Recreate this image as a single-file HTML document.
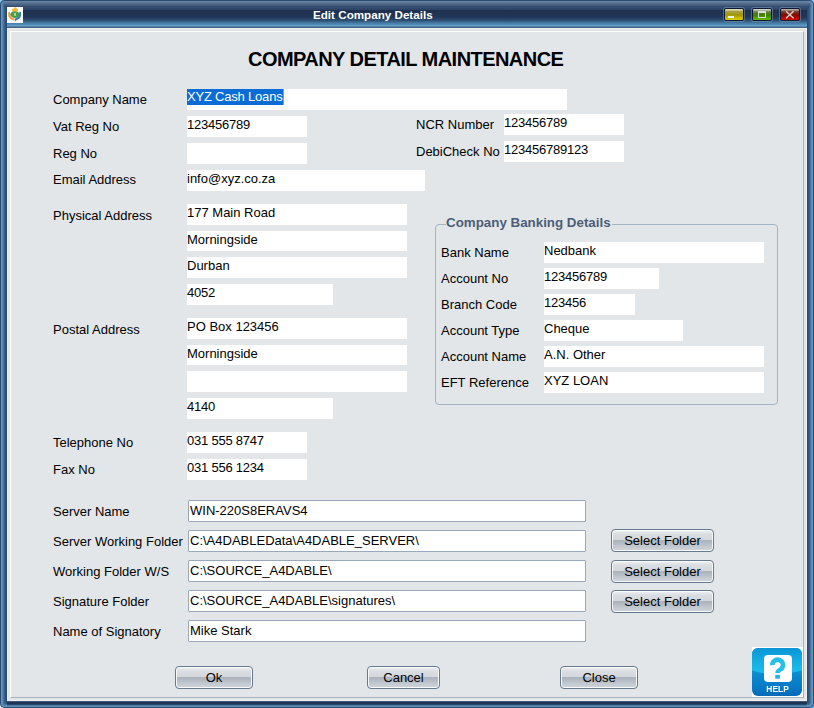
<!DOCTYPE html>
<html><head><meta charset="utf-8">
<style>
html,body{margin:0;padding:0;width:814px;height:708px;overflow:hidden;background:#8ec6f4;}
*{box-sizing:border-box;}
body{font-family:"Liberation Sans",sans-serif;font-size:13px;color:#000;position:relative;}
.a{position:absolute;}
#win{position:absolute;left:0;top:0;width:814px;height:708px;border-radius:5px 5px 5px 5px;overflow:hidden;background:#2c4f78;}
#ring{position:absolute;left:0;top:0;width:814px;height:708px;border-radius:5px 5px 5px 5px;
 box-shadow:inset 0 0 0 1px #2a4a70,inset 0 0 0 2px #6597bf,inset 0 0 0 3px #5889b3,inset 0 0 0 4px #46729b,inset 0 0 0 5px #386189,inset 0 0 0 6px #2e527a,inset 0 0 0 7px #2a4b72;}
#title{position:absolute;left:7px;top:0;width:800px;height:28px;
 background:linear-gradient(180deg,#2b4c70 0,#2b4c70 1px,#6b87a6 1px,#5a7392 3px,#3d5678 6px,#2e4567 9px,#2d4466 10px,#1e3050 10px,#213656 17px,#2a4a6e 20px,#4f87b3 24px,#66a0c9 26px,#4a6a8c 27px,#3a5878 28px);
 }
#ttop{position:absolute;left:2px;top:0;width:810px;height:7px;-webkit-mask-image:linear-gradient(90deg,transparent 0,#000 5px,#000 805px,transparent 810px);mask-image:linear-gradient(90deg,transparent 0,#000 5px,#000 805px,transparent 810px);background:linear-gradient(180deg,#2b4c70 0,#2b4c70 1px,#6b87a6 1px,#5a7392 3px,#3d5678 6px,#2e4567 7px);}
#tleft{position:absolute;left:0;top:10px;width:7px;height:18px;background:linear-gradient(90deg,#2a4a70 0,#2a4a70 1px,#5f92bb 1px,#5b8db6 3px,#3d6790 5px,#2c4f78 7px);opacity:.0}
#bottom{position:absolute;left:7px;top:701px;width:800px;height:7px;
 background:linear-gradient(180deg,#3d5576 0,#3d5576 1px,#213355 1px,#1f3453 2px,#1f3453 3px,#2b4a6b 3px,#2b4a6b 4px,#4679a0 4px,#4679a0 5px,#5a90ba 5px,#5a90ba 6px,#2c4e70 6px);}
#client{position:absolute;left:7px;top:28px;width:800px;height:673px;background:#e3e6e9;border:1px solid #eef0f2;}
#panel{position:absolute;left:10px;top:31px;width:794px;height:667px;border-top:1px solid #fff;border-left:1px solid #fff;border-right:1px solid #a8b3bd;border-bottom:1px solid #a8b3bd;}
.t{position:absolute;white-space:nowrap;line-height:15px;height:15px;}
.box{position:absolute;background:#fff;white-space:nowrap;line-height:15px;padding-left:1px;}
.box span{position:absolute;left:0;}
.sbox{position:absolute;background:#fff;border:1px solid #99a9bb;border-radius:1px;white-space:nowrap;line-height:15px;}
.btn{position:absolute;height:23px;border:1px solid #66798e;border-radius:4px;text-align:center;line-height:21px;
 background:linear-gradient(180deg,#eef0f2 0,#e6e9ec 2px,#dadde2 4px,#d4d8dd 9.5px,#aab2bc 10px,#b0b7c1 12px,#c4cad1 17px,#d0d5db 21px);
 box-shadow:inset 0 0 0 1px rgba(255,255,255,.85);}
.wb{position:absolute;top:8px;width:20px;height:13px;border:1px solid #0d1a30;border-radius:2px;box-shadow:0 0 0 1px rgba(140,165,195,.45);}
</style></head><body>
<div class="a" style="left:0;top:700px;width:8px;height:8px;background:#e4e8ec;"></div>
<div class="a" style="left:806px;top:700px;width:8px;height:8px;background:#3cbcf0;"></div>
<div id="win">
 <div id="ring"></div>
 <div id="title"></div>
 <div id="ttop"></div>
 <!-- icon -->
 <div class="a" style="left:7px;top:7px;width:16px;height:16px;background:#fff;">
  <svg width="16" height="16" viewBox="0 0 16 16" style="position:absolute;left:0;top:0">
   <path d="M1.4 5 C0.6 8.5 1.6 11.6 4.8 12.8 C6.2 13.3 7 13.9 7.3 14.9 L7.5 11.8 C6.5 11 5 10.6 4.2 9.6 C3.3 8.4 3 6.3 2.9 4.8 Z" fill="#f8a135"/>
   <path d="M13.9 5 C14.7 8.5 13.7 11.6 10.5 12.8 C9.1 13.3 8.3 13.9 8 14.9 L7.8 11.8 C8.8 11 10.3 10.6 11.1 9.6 C12 8.4 12.3 6.3 12.4 4.8 Z" fill="#3a7cc9"/>
   <path d="M3 7.4 Q5 4.1 8 4.1 Q11 4.1 13 7.4 Q11 10.9 8 10.9 Q5 10.9 3 7.4Z" fill="#4a9b45"/>
   <ellipse cx="8" cy="2.9" rx="3.1" ry="1.7" fill="#f6b62f"/>
   <ellipse cx="8.3" cy="1.2" rx="1.2" ry="1" fill="#f6b62f"/>
   <rect x="7" y="6" width="2" height="2.8" fill="#b3d3ab"/>
  </svg>
 </div>
 <div class="a" style="left:313px;top:8px;color:#fff;font-weight:bold;font-size:11.65px;line-height:14px;white-space:nowrap;">Edit Company Details</div>
 <!-- window buttons -->
 <div class="wb" style="left:724px;background:linear-gradient(180deg,#e0dcb0 0,#e0dcb0 1px,#aca458 2px,#a49c20 4px,#a09800 6px,#b8b000 8px,#d0c800 10px,#d8d000 11px);">
  <div class="a" style="left:3px;top:7px;width:6px;height:2px;background:#f0f0e0;"></div></div>
 <div class="wb" style="left:752px;background:linear-gradient(180deg,#d0d4c8 0,#d0d4c8 1px,#7c8c68 2px,#5a7a30 4px,#3c7c00 6px,#4c9800 8px,#62b000 10px,#6cbc00 11px);">
  <div class="a" style="left:5px;top:2px;width:8px;height:7px;border:1px solid #d8ded0;border-top-width:2px;"></div></div>
 <div class="wb" style="left:780px;background:linear-gradient(180deg,#b8a8a0 0,#b8a8a0 1px,#7c4a40 2px,#742818 4px,#880800 6px,#a80800 8px,#c81000 10px,#cc1000 11px);">
  <svg class="a" style="left:4px;top:2px" width="10" height="8" viewBox="0 0 10 8"><path d="M1 0.2 L8.6 7.2 M8.6 0.2 L1 7.2" stroke="#d4ccc8" stroke-width="1.45"/></svg></div>

 <div id="bottom"></div>
 <div id="client"></div>
 <div id="panel"></div>

 <div class="a" style="left:248px;top:48px;font-weight:bold;font-size:20px;letter-spacing:-0.55px;line-height:22px;white-space:nowrap;">COMPANY DETAIL MAINTENANCE</div>

 <!-- left labels -->
 <div class="t" style="left:53px;top:92px;">Company Name</div>
 <div class="t" style="left:53px;top:119px;">Vat Reg No</div>
 <div class="t" style="left:53px;top:146px;">Reg No</div>
 <div class="t" style="left:53px;top:172px;">Email Address</div>
 <div class="t" style="left:53px;top:208px;">Physical Address</div>
 <div class="t" style="left:53px;top:322px;">Postal Address</div>
 <div class="t" style="left:53px;top:435px;">Telephone No</div>
 <div class="t" style="left:53px;top:462px;">Fax No</div>

 <!-- left boxes -->
 <div class="box" style="left:187px;top:89px;width:380px;height:21px;padding:0;"><span style="top:0;left:0;height:16px;line-height:16px;background:#0a6cd4;color:#fff;padding-right:1px;letter-spacing:-0.2px;width:96px;">XYZ Cash Loans</span><span style="top:0;left:96px;width:1px;height:16px;background:#e8862a;"></span></div>
 <div class="box" style="left:187px;top:116px;width:120px;height:21px;"><span style="top:1px;letter-spacing:-0.23px;">123456789</span></div>
 <div class="box" style="left:187px;top:143px;width:120px;height:21px;"></div>
 <div class="box" style="left:187px;top:170px;width:238px;height:21px;"><span style="top:1px;">info@xyz.co.za</span></div>
 <div class="box" style="left:187px;top:204px;width:220px;height:21px;"><span style="top:1px;">177 Main Road</span></div>
 <div class="box" style="left:187px;top:231px;width:220px;height:20px;"><span style="top:1px;">Morningside</span></div>
 <div class="box" style="left:187px;top:257px;width:220px;height:21px;"><span style="top:1px;">Durban</span></div>
 <div class="box" style="left:187px;top:284px;width:146px;height:21px;"><span style="top:1px;letter-spacing:-0.23px;">4052</span></div>
 <div class="box" style="left:187px;top:318px;width:220px;height:21px;"><span style="top:1px;">PO Box 123456</span></div>
 <div class="box" style="left:187px;top:345px;width:220px;height:20px;"><span style="top:1px;">Morningside</span></div>
 <div class="box" style="left:187px;top:371px;width:220px;height:21px;"></div>
 <div class="box" style="left:187px;top:398px;width:146px;height:21px;"><span style="top:1px;letter-spacing:-0.23px;">4140</span></div>
 <div class="box" style="left:187px;top:432px;width:120px;height:21px;"><span style="top:1px;letter-spacing:-0.23px;">031 555 8747</span></div>
 <div class="box" style="left:187px;top:459px;width:120px;height:21px;"><span style="top:1px;letter-spacing:-0.23px;">031 556 1234</span></div>

 <!-- NCR / DebiCheck -->
 <div class="t" style="left:416px;top:117px;">NCR Number</div>
 <div class="t" style="left:416px;top:144px;">DebiCheck No</div>
 <div class="box" style="left:504px;top:114px;width:120px;height:21px;"><span style="top:1px;letter-spacing:-0.23px;">123456789</span></div>
 <div class="box" style="left:504px;top:141px;width:120px;height:21px;"><span style="top:1px;letter-spacing:-0.23px;">123456789123</span></div>

 <!-- banking group -->
 <div class="a" style="left:435px;top:224px;width:343px;height:181px;border:1px solid #a3b3c4;border-radius:4px;"></div>
 <div class="a" style="left:446px;top:215px;padding:0 1px 0 0;background:#e3e6e9;color:#4c5d78;font-weight:bold;font-size:13.35px;line-height:15px;white-space:nowrap;">Company Banking Details</div>
 <div class="t" style="left:441px;top:245px;">Bank Name</div>
 <div class="t" style="left:441px;top:271px;">Account No</div>
 <div class="t" style="left:441px;top:297px;">Branch Code</div>
 <div class="t" style="left:441px;top:323px;">Account Type</div>
 <div class="t" style="left:441px;top:349px;">Account Name</div>
 <div class="t" style="left:441px;top:375px;">EFT Reference</div>
 <div class="box" style="left:544px;top:242px;width:220px;height:21px;"><span style="top:1px;">Nedbank</span></div>
 <div class="box" style="left:544px;top:268px;width:115px;height:21px;"><span style="top:1px;letter-spacing:-0.23px;">123456789</span></div>
 <div class="box" style="left:544px;top:294px;width:91px;height:21px;"><span style="top:1px;letter-spacing:-0.23px;">123456</span></div>
 <div class="box" style="left:544px;top:320px;width:139px;height:21px;"><span style="top:1px;">Cheque</span></div>
 <div class="box" style="left:544px;top:346px;width:220px;height:21px;"><span style="top:1px;">A.N. Other</span></div>
 <div class="box" style="left:544px;top:372px;width:220px;height:21px;"><span style="top:1px;">XYZ LOAN</span></div>

 <!-- server section -->
 <div class="t" style="left:53px;top:504px;">Server Name</div>
 <div class="t" style="left:53px;top:534px;">Server Working Folder</div>
 <div class="t" style="left:53px;top:564px;">Working Folder W/S</div>
 <div class="t" style="left:53px;top:594px;">Signature Folder</div>
 <div class="t" style="left:53px;top:624px;">Name of Signatory</div>
 <div class="sbox" style="left:188px;top:500px;width:398px;height:22px;"><span class="a" style="left:1px;top:2px;">WIN-220S8ERAVS4</span></div>
 <div class="sbox" style="left:188px;top:530px;width:398px;height:22px;"><span class="a" style="left:1px;top:2px;">C:\A4DABLEData\A4DABLE_SERVER\</span></div>
 <div class="sbox" style="left:188px;top:560px;width:398px;height:22px;"><span class="a" style="left:1px;top:2px;">C:\SOURCE_A4DABLE\</span></div>
 <div class="sbox" style="left:188px;top:590px;width:398px;height:22px;"><span class="a" style="left:1px;top:2px;">C:\SOURCE_A4DABLE\signatures\</span></div>
 <div class="sbox" style="left:188px;top:620px;width:398px;height:22px;"><span class="a" style="left:1px;top:2px;">Mike Stark</span></div>
 <div class="btn" style="left:611px;top:529px;width:103px;">Select Folder</div>
 <div class="btn" style="left:611px;top:560px;width:103px;">Select Folder</div>
 <div class="btn" style="left:611px;top:590px;width:103px;">Select Folder</div>

 <!-- bottom buttons -->
 <div class="btn" style="left:175px;top:666px;width:78px;">Ok</div>
 <div class="btn" style="left:367px;top:666px;width:73px;">Cancel</div>
 <div class="btn" style="left:560px;top:666px;width:78px;">Close</div>

 <!-- help -->
 <div class="a" style="left:752px;top:647px;width:51px;height:50px;background:#fff;">
  <div class="a" style="left:0;top:1px;width:50px;height:48px;border-radius:6px;overflow:hidden;background:linear-gradient(180deg,#0c98d8 0,#0c98d8 20px,#0b8ad0 26px,#0678c4 40px,#0569b9 48px);">
   <div class="a" style="left:-35px;top:-50px;width:120px;height:76px;border-radius:50%;background:linear-gradient(180deg,#0a94d6 0,#0a94d6 50px,#11a4de 58px,#19b4e6 68px,#1ebdea 76px);"></div>
  </div>
  <div class="a" style="left:12px;top:8px;width:28px;height:27px;border-radius:4px;background:#fff;"></div>
  <svg class="a" style="left:0;top:0" width="51" height="50" viewBox="0 0 51 50">
   <path d="M20.3 18.2 A5.35 5.35 0 1 1 29.2 22 Q25.6 23.6 25.6 26" fill="none" stroke="#26c0ea" stroke-width="4.6"/>
   <rect x="23.25" y="27.9" width="4.7" height="3.8" fill="#1fb4e4"/>
  </svg>
  <div class="a" style="left:0;top:37px;width:51px;text-align:center;color:#fff;font-weight:bold;font-size:9.8px;line-height:10px;transform:scaleX(0.86);transform-origin:26px 0;">HELP</div>
 </div>
</div>
</body></html>
